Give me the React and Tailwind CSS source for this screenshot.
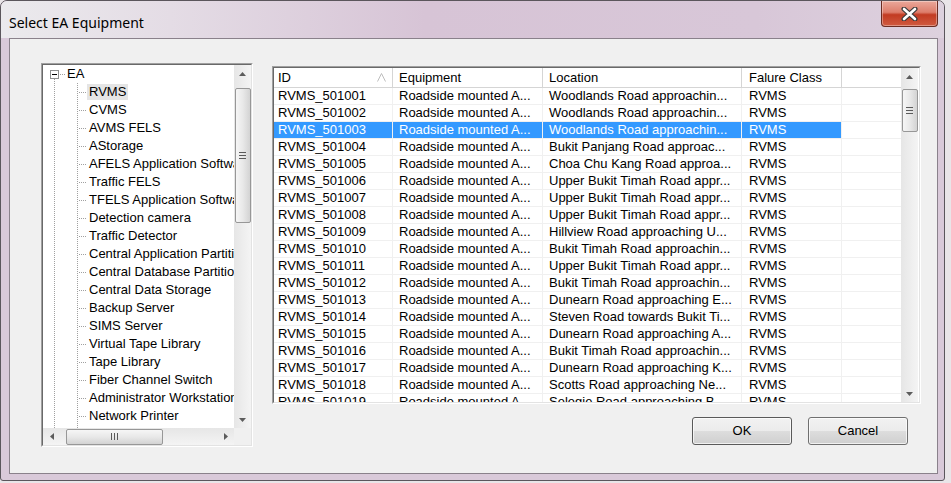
import React from "react";

const treeItems = [
  "RVMS",
  "CVMS",
  "AVMS FELS",
  "AStorage",
  "AFELS Application Software",
  "Traffic FELS",
  "TFELS Application Software",
  "Detection camera",
  "Traffic Detector",
  "Central Application Partition",
  "Central Database Partition",
  "Central Data Storage",
  "Backup Server",
  "SIMS Server",
  "Virtual Tape Library",
  "Tape Library",
  "Fiber Channel Switch",
  "Administrator Workstation",
  "Network Printer",
  "Network Switch",
];

const rows = [
  ["RVMS_501001", "Woodlands Road approachin..."],
  ["RVMS_501002", "Woodlands Road approachin..."],
  ["RVMS_501003", "Woodlands Road approachin..."],
  ["RVMS_501004", "Bukit Panjang Road approac..."],
  ["RVMS_501005", "Choa Chu Kang Road approa..."],
  ["RVMS_501006", "Upper Bukit Timah Road appr..."],
  ["RVMS_501007", "Upper Bukit Timah Road appr..."],
  ["RVMS_501008", "Upper Bukit Timah Road appr..."],
  ["RVMS_501009", "Hillview Road approaching U..."],
  ["RVMS_501010", "Bukit Timah Road approachin..."],
  ["RVMS_501011", "Upper Bukit Timah Road appr..."],
  ["RVMS_501012", "Bukit Timah Road approachin..."],
  ["RVMS_501013", "Dunearn Road approaching E..."],
  ["RVMS_501014", "Steven Road towards Bukit Ti..."],
  ["RVMS_501015", "Dunearn Road approaching A..."],
  ["RVMS_501016", "Bukit Timah Road approachin..."],
  ["RVMS_501017", "Dunearn Road approaching K..."],
  ["RVMS_501018", "Scotts Road approaching Ne..."],
  ["RVMS_501019", "Selegie Road approaching B..."],
];

const Tri = ({ dir }) => {
  if (dir === "up")
    return (
      <svg width="7" height="4" viewBox="0 0 7 4"><path d="M0 4L3.5 0L7 4Z" fill="#5c5c5c" /></svg>
    );
  if (dir === "down")
    return (
      <svg width="7" height="4" viewBox="0 0 7 4"><path d="M0 0L7 0L3.5 4Z" fill="#5c5c5c" /></svg>
    );
  if (dir === "left")
    return (
      <svg width="4" height="7" viewBox="0 0 4 7"><path d="M4 0L0 3.5L4 7Z" fill="#5c5c5c" /></svg>
    );
  return (
    <svg width="4" height="7" viewBox="0 0 4 7"><path d="M0 0L4 3.5L0 7Z" fill="#5c5c5c" /></svg>
  );
};

const GripV = () => (
  <svg width="7" height="7" viewBox="0 0 7 7" shapeRendering="crispEdges">
    <path d="M0 0.5H7M0 3.5H7M0 6.5H7" stroke="#5a5a5a" strokeWidth="1" />
  </svg>
);

const GripH = () => (
  <svg width="7" height="7" viewBox="0 0 7 7" shapeRendering="crispEdges">
    <path d="M0.5 0V7M3.5 0V7M6.5 0V7" stroke="#5a5a5a" strokeWidth="1" />
  </svg>
);

const VScroll = ({ thumbClass }) => (
  <div className="w-[17px] h-full flex flex-col bg-gradient-to-r from-[#e6e6e6] to-[#f4f4f4]">
    <div className="h-[17px] flex items-center justify-center"><Tri dir="up" /></div>
    <div className="flex-1 flex flex-col">
      <div className={`mx-auto w-[16px] rounded-[2px] border border-[#979797] bg-gradient-to-r from-[#f6f6f6] via-[#e8e8e8] to-[#d3d3d3] flex items-center justify-center ${thumbClass}`}>
        <GripV />
      </div>
    </div>
    <div className="h-[17px] flex items-center justify-center"><Tri dir="down" /></div>
  </div>
);

const TreeLines = () => (
  <svg width="44" height="18" viewBox="0 0 44 18" shapeRendering="crispEdges" className="shrink-0">
    <path d="M11.5 0V18M34.5 0V18M36 9.5H44" stroke="#a0a0a0" strokeWidth="1" strokeDasharray="1 1" />
  </svg>
);

const RootLines = () => (
  <svg width="22" height="18" viewBox="0 0 22 18" shapeRendering="crispEdges" className="shrink-0">
    <path d="M11.5 14V18M17 9.5H22" stroke="#a0a0a0" strokeWidth="1" strokeDasharray="1 1" />
    <rect x="7.5" y="5.5" width="8" height="8" fill="#fff" stroke="#8e8f8f" />
    <path d="M9 9.5H14" stroke="#000" strokeWidth="1" />
  </svg>
);

const Sunken = ({ className, children }) => (
  <div className={`border border-t-[#a0a0a0] border-l-[#a0a0a0] border-r-white border-b-white ${className}`}>
    <div className="w-full h-full border border-t-[#696969] border-l-[#696969] border-r-[#e3e3e3] border-b-[#e3e3e3] bg-white flex overflow-hidden">
      {children}
    </div>
  </div>
);

const Button = ({ children, def }) => (
  <button
    className={`w-[100px] h-[28px] rounded-[3px] border ${def ? "border-[#5a5a5a]" : "border-[#707070]"} bg-[linear-gradient(180deg,#f2f2f2_0%,#ebebeb_50%,#dddddd_51%,#cfcfcf_100%)] shadow-[inset_0_0_0_1px_rgba(255,255,255,0.7)] text-[13px] text-black`}
  >
    {children}
  </button>
);

const cols = [
  { w: "w-[119px]", pl: "pl-[4px]" },
  { w: "w-[150px]", pl: "pl-[6px]" },
  { w: "w-[199px]", pl: "pl-[6px]" },
  { w: "w-[100px]", pl: "pl-[7px]" },
];

export default function App() {
  return (
    <div className="w-[951px] h-[483px] bg-[#e9e5e8] overflow-hidden font-['Liberation_Sans',Arial,sans-serif] text-[13px] text-black">
      <div className="w-[945px] h-[481px] border border-[#5b565c] rounded-t-[7px] rounded-b-[3px] bg-[#d9c9d9] flex flex-col overflow-hidden">
        {/* title bar */}
        <div className="h-[37px] shrink-0 flex justify-between bg-[linear-gradient(90deg,#ebeaed_0%,#e4dce5_18%,#d7c4d6_45%,#d8c7d8_80%,#ddd1de_100%)]">
          <div className="pl-[8px] pt-[13px] font-['Noto_Sans',sans-serif] text-[14px] leading-[18px] text-black">
            Select EA Equipment
          </div>
          <div className="mr-[6px] w-[57px] h-[26px] rounded-b-[4px] border border-t-0 border-[#6b2c22] bg-[linear-gradient(180deg,#eaa89b_0%,#dd7d6b_45%,#c23b22_55%,#d05a40_100%)] shadow-[inset_0_0_0_1px_rgba(255,255,255,0.35)] flex items-center justify-center">
            <svg width="17" height="14" viewBox="0 0 17 14">
              <path d="M3 2L14 12M14 2L3 12" stroke="#3b3b3b" strokeWidth="5" strokeLinecap="round" />
              <path d="M3 2L14 12M14 2L3 12" stroke="#ffffff" strokeWidth="2.6" strokeLinecap="round" />
            </svg>
          </div>
        </div>

        {/* client area */}
        <div className="flex-1 ml-[8px] mr-[6px] mb-[6px] border border-[#8a818b] bg-[#f0f0f0] flex">
          {/* tree */}
          <Sunken className="ml-[31px] mt-[24px] w-[212px] h-[384px] shrink-0">
            <div className="flex flex-col w-full">
              <div className="flex flex-1 min-h-0">
                <div className="w-[191px] overflow-hidden flex flex-col whitespace-nowrap">
                  <div className="h-[18px] shrink-0 flex items-center">
                    <RootLines />
                    <span className="px-[2px] leading-[16px]">EA</span>
                  </div>
                  {treeItems.map((t, i) => (
                    <div key={t} className="h-[18px] shrink-0 flex items-center">
                      <TreeLines />
                      <span className={`px-[2px] h-[16px] leading-[16px] ${i === 0 ? "bg-[#e5e5e5]" : ""}`}>{t}</span>
                    </div>
                  ))}
                </div>
                <VScroll thumbClass="mt-[6px] h-[135px]" />
              </div>
              <div className="h-[17px] shrink-0 flex">
                <div className="w-[191px] flex bg-gradient-to-b from-[#e6e6e6] to-[#f4f4f4]">
                  <div className="w-[17px] flex items-center justify-center"><Tri dir="left" /></div>
                  <div className="flex-1 flex">
                    <div className="ml-[6px] w-[97px] h-[16px] my-auto rounded-[2px] border border-[#979797] bg-gradient-to-b from-[#f6f6f6] via-[#e8e8e8] to-[#d3d3d3] flex items-center justify-center">
                      <GripH />
                    </div>
                  </div>
                  <div className="w-[17px] flex items-center justify-center"><Tri dir="right" /></div>
                </div>
                <div className="w-[17px] bg-[#f0f0f0]" />
              </div>
            </div>
          </Sunken>

          {/* right column */}
          <div className="ml-[19px] mt-[27px] flex flex-col">
            <Sunken className="w-[649px] h-[338px]">
              <div className="w-[627px] flex flex-col whitespace-nowrap overflow-hidden">
                <div className="h-[20px] shrink-0 flex border-b border-[#d5d5d5] bg-white">
                  <div className="w-[119px] pl-[4px] pr-[6px] border-r border-[#d5d5d5] flex items-center justify-between">
                    <span>ID</span>
                    <svg width="9" height="9" viewBox="0 0 9 9">
                      <path d="M0.5 8.5L4.5 0.5L8.5 8.5" fill="none" stroke="#bdbdbd" strokeWidth="1" />
                    </svg>
                  </div>
                  <div className="w-[150px] pl-[6px] border-r border-[#d5d5d5] flex items-center">Equipment</div>
                  <div className="w-[199px] pl-[6px] border-r border-[#d5d5d5] flex items-center">Location</div>
                  <div className="w-[100px] pl-[7px] border-r border-[#d5d5d5] flex items-center">Falure Class</div>
                  <div className="flex-1" />
                </div>
                {rows.map(([id, loc], i) => {
                  const sel = i === 2;
                  const vals = [id, "Roadside mounted A...", loc, "RVMS"];
                  return (
                    <div key={id} className="h-[17px] shrink-0 flex border-b border-[#f0f0f0]">
                      {cols.map((c, j) => (
                        <div
                          key={j}
                          className={`${c.w} ${c.pl} border-r border-[#f0f0f0] leading-[16px] overflow-hidden ${sel ? "bg-[#3399ff] text-white" : ""}`}
                        >
                          {vals[j]}
                        </div>
                      ))}
                      <div className="flex-1" />
                    </div>
                  );
                })}
              </div>
              <VScroll thumbClass="mt-[4px] h-[43px]" />
            </Sunken>
            <div className="mt-[13px] pr-[13px] flex justify-end gap-[16px]">
              <Button def>OK</Button>
              <Button>Cancel</Button>
            </div>
          </div>
        </div>
      </div>
    </div>
  );
}
